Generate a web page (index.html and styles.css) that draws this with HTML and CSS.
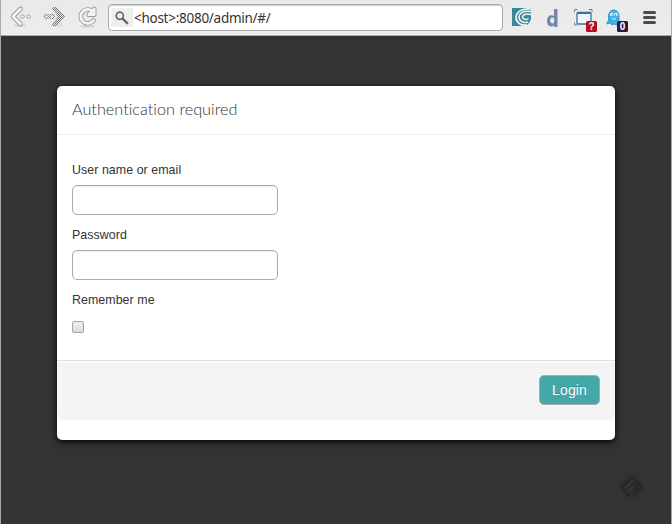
FILE: index.html
```html
<!DOCTYPE html>
<html lang="en">
<head>
<meta charset="utf-8">
<title>Authentication required</title>
<link rel="stylesheet" href="styles.css">
</head>
<body>
<div class="window">
  <header class="toolbar">
    <svg class="nav-icons" width="105" height="35" viewBox="1 0 105 35" aria-hidden="true">
      <defs>
        <pattern id="dither" width="2" height="2" patternUnits="userSpaceOnUse"><rect width="2" height="2" fill="#e8e8e8"/><rect width="1" height="1" fill="#777"/><rect x="1" y="1" width="1" height="1" fill="#777"/></pattern>
      </defs>
      <ellipse cx="20" cy="25.500" rx="7" ry="1.500" fill="#d5d5d5"/>
      <g fill="none" stroke-linecap="round" stroke-linejoin="round">
        <path d="M20.500 9l-7.500 7.500 7.500 7.500" stroke="#999994" stroke-width="4.600"/>
        <path d="M20.500 9l-7.500 7.500 7.500 7.500" stroke="#f3f3f0" stroke-width="2.800"/>
      </g>
      <g fill="#f4f4f2" stroke="#a0a09b"><circle cx="22.500" cy="16.500" r="1.800"/><circle cx="28.500" cy="16.500" r="1.800"/></g>
      <ellipse cx="56" cy="25.500" rx="7" ry="1.500" fill="#dcdcdc"/>
      <path d="M56.500 7h-4l-.5 2 6 7.500-6 7.500.5 2h4l8.500-9.500z" fill="url(#dither)"/>
      <g fill="#eee" stroke="url(#dither)" stroke-width="1.500"><circle cx="46.500" cy="16.500" r="2"/><circle cx="52" cy="16.500" r="2"/></g>
      <ellipse cx="87" cy="26.500" rx="8" ry="1.500" fill="#d5d5d5"/>
      <g fill="none" stroke-linecap="round" stroke-linejoin="round">
        <path d="M92.500 11.300a7 7 0 1 0 1 9.200M94.200 9v5.700h-5.500z" stroke="#999994" stroke-width="4.600"/>
        <path d="M92.500 11.300a7 7 0 1 0 1 9.200M94.200 9v5.700h-5.500z" stroke="#f3f3f0" stroke-width="2.800"/>
      </g>
    </svg>
    <div class="address">
      <span class="search"><svg width="14" height="14" viewBox="0 0 14 14"><circle cx="4.800" cy="4.800" r="3.600" fill="none" stroke="#6a6a6a" stroke-width="1.700"/><path d="M7.600 7.600l4.600 4.600" stroke="#6a6a6a" stroke-width="2.400" stroke-linecap="round"/></svg></span>
      <span class="url">&lt;host&gt;:8080/admin/#/</span>
    </div>
    <svg class="extensions" width="168" height="35" viewBox="503 0 168 35">
      <rect x="512" y="8" width="19" height="18" fill="#398798"/>
      <path d="M531 26h-6c3-1 5-4 6-7z" fill="#ececec"/>
      <g fill="none" stroke="#f1f7f7">
        <path d="M531 9c-8-1-15 2.500-15 8.500 0 5 5 8.500 11 7.500" stroke-width="1.700"/>
        <path d="M531 11.500c-7-1-12 1.500-12 5.500s4.500 6.500 9 5" stroke-width="1.500"/>
        <path d="M531 14.500c-5-1.500-8.500.5-8.500 2.500s3.500 3.500 6 1.500" stroke-width="1.500"/>
      </g>
      <path d="M554 9h3.500v18H554v-1.500c-2.500 2-7 1-7-4.500s4.500-7 7-5zm-1.500 8.500c-3 0-3 6 0 6 2.500 0 2.500-6 0-6z" fill="#7588a8" fill-rule="evenodd"/>
      <rect x="577" y="12.500" width="14" height="11.500" rx="1" fill="#f2f5f8" stroke="#3276a8" stroke-width="1.300"/>
      <path d="M577 13h14" stroke="#3276a8" stroke-width="2"/>
      <path d="M574.500 12v-2.500h3M589 9.500h3V12M574.500 22.500v2.500h3" fill="none" stroke="#4a86b0"/>
      <rect x="586" y="21" width="11" height="11" rx="1.500" fill="#b50e20"/>
      <text class="badge" x="591.500" y="30">?</text>
      <path d="M608.500 16c0-8 10.500-8 10.500 0v7l-2 2-3-1-2 1-2-2-3 1c-.8-2 1.500-2 1.500-4z" fill="#42aee7" stroke="#279fda"/>
      <circle cx="611.700" cy="14.500" r="1.800" fill="#e9faff"/><circle cx="616" cy="14.500" r="1.800" fill="#e9faff"/>
      <path d="M612 14v1.500M615.700 14v1.500" stroke="#087cad"/><path d="M612 18.500q2 1.500 4 0" fill="none" stroke="#d9f5ff"/>
      <rect x="617" y="21" width="11" height="11" rx="1.500" fill="#30163e"/>
      <text class="badge" x="622.500" y="30">0</text>
      <path d="M644.500 12.500h10M644.500 17.500h10M644.500 22.500h10" stroke="#4b4b4b" stroke-width="3" stroke-linecap="round"/>
    </svg>
  </header>
  <main class="page">
    <form class="modal">
      <div class="modal-header"><h1>Authentication required</h1></div>
      <div class="modal-body">
        <label for="user">User name or email</label>
        <input class="field" id="user" type="text">
        <label for="pass">Password</label>
        <input class="field" id="pass" type="password">
        <label for="remember">Remember me</label>
        <input class="check" id="remember" type="checkbox">
      </div>
      <div class="modal-footer"><button class="login" type="button">Login</button></div>
    </form>
    <svg class="corner-mark" width="26" height="24" viewBox="0 0 26 24"><path d="M11 1.200q2-1.800 4 0l9 9q1.800 1.800 0 3.600L16.500 22H9L1.500 13.800q-1.500-1.800 0-3.600z" fill="#292929"/><path d="M6.500 13l6.500-6.500M9.500 16.500l4-4M12.500 19.500l.8-.8" stroke="#363636" stroke-width="2.500" stroke-linecap="round"/></svg>
  </main>
</div>
</body>
</html>
```
FILE: styles.css
```css
* { box-sizing: border-box; }
body { margin: 0; font-family: "Liberation Sans", Arial, sans-serif; overflow: hidden; }
.window { height: 524px; display: flex; flex-direction: column; background: #333; border: solid #a8a8a8; border-width: 0 1px; }
.toolbar { height: 36px; flex: none; display: flex; align-items: flex-start; background: linear-gradient(#e9e9e9, #ededed); border-bottom: 1px solid #aaa; }
.nav-icons, .extensions { flex: none; display: block; }
.address { flex: none; width: 395px; height: 27px; margin: 4px 0 0 2px; display: flex; background: #fff; border: 1px solid #aaa; border-radius: 4px; box-shadow: inset 0 1px 1px #ccc; padding: 3px 2px; }
.search { width: 22px; height: 19px; background: #efefef; display: flex; align-items: center; justify-content: center; }
.url { margin-left: 1px; font: 13.5px/20px "Noto Sans", sans-serif; letter-spacing: -0.27px; color: #333; white-space: nowrap; }
.badge { font: bold 10px "Liberation Sans", sans-serif; fill: #fff; text-anchor: middle; }
.page { flex: 1; position: relative; padding: 50px 56px; }
.modal { width: 558px; height: 354px; background: #fff; border-radius: 5px; box-shadow: 0 2px 6px #000; }
.modal-header { height: 49px; padding: 0 15px; border-bottom: 1px solid #eee; }
h1 { margin: 0; font: 300 16.25px/46px Lato, sans-serif; font-variant-ligatures: none; color: #333; }
.modal-body { height: 225px; padding: 25px 15px 0; display: flex; flex-direction: column; align-items: flex-start; }
label { height: 20px; margin-bottom: 5px; font-size: 12.4px; line-height: 20px; letter-spacing: 0.06px; color: #333; }
.field { width: 206px; height: 30px; margin: 0 0 10px; border: 1px solid #aaa; border-radius: 5px; background: #fff; box-shadow: inset 0 1px 1px #f1f1f1; outline: 0; }
.check { appearance: none; width: 12px; height: 12px; margin: 6px 0 0; border: 1px solid #a5a5a5; border-radius: 2px; background: linear-gradient(#eee, #dcdcdc); }
.modal-footer { height: 60px; display: flex; justify-content: flex-end; padding: 14px 15px 0; background: #f4f4f4; border-top: 1px solid #ddd; border-radius: 0 0 5px 5px; box-shadow: inset 0 1px 0 #fff; }
.login { width: 61px; height: 30px; padding: 0; color: #fff; background: #45a8a8; border: 1px solid #aaa; border-radius: 5px; font: 14px/28px "Liberation Sans", sans-serif; letter-spacing: 0.1px; text-shadow: 0 -1px 0 #34888c; }
.corner-mark { position: absolute; right: 26px; bottom: 25px; }
```
